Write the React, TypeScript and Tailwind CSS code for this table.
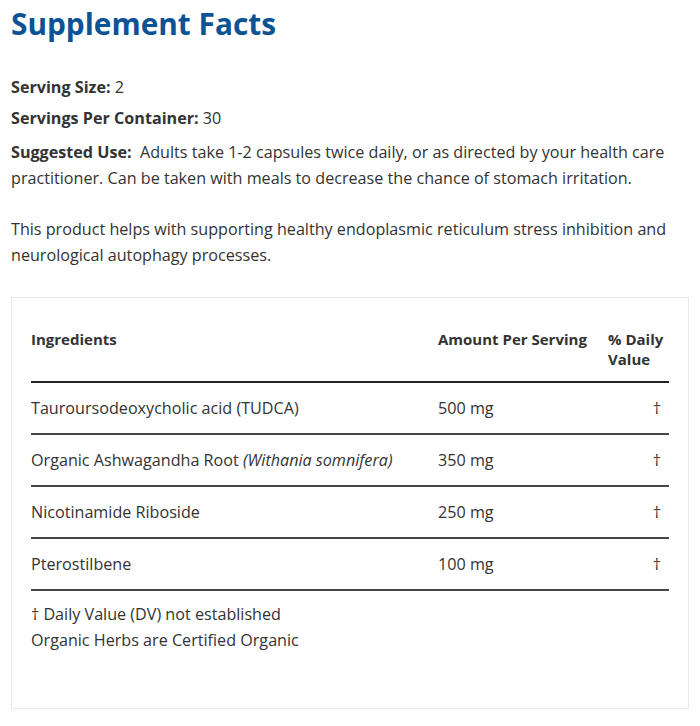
const rows = [
  { name: "Tauroursodeoxycholic acid (TUDCA)", latin: "", amount: "500 mg" },
  { name: "Organic Ashwagandha Root ", latin: "(Withania somnifera)", amount: "350 mg" },
  { name: "Nicotinamide Riboside", latin: "", amount: "250 mg" },
  { name: "Pterostilbene", latin: "", amount: "100 mg" },
];

export default function App() {
  return (
    <div className="min-h-screen bg-white px-[11px] pt-[6px] text-[16.15px] text-[#333333] font-['Open_Sans',sans-serif]">
      <h1 className="text-[29.8px] leading-[36px] font-bold text-[#0b5394]">Supplement Facts</h1>

      <p className="mt-[32px] leading-[26px]">
        <span className="font-bold">Serving Size:</span> 2
      </p>
      <p className="mt-[5px] leading-[26px]">
        <span className="font-bold">Servings Per Container:</span> 30
      </p>
      <p className="mt-[8px] leading-[26px]">
        <span className="font-bold">Suggested Use:</span>&nbsp; Adults take 1-2 capsules twice daily, or as directed by your health care
        practitioner. Can be taken with meals to decrease the chance of stomach irritation.
      </p>
      <p className="mt-[25px] leading-[26px]">
        This product helps with supporting healthy endoplasmic reticulum stress inhibition and neurological autophagy processes.
      </p>

      <div className="mt-[29px] border border-[#e8e8e8] px-[19px] pt-[31px] pb-[55px]">
        <div className="grid grid-cols-[407px_170px_1fr] border-b-2 border-[#222] pb-[12px] text-[15px] leading-[20px] font-bold">
          <div>Ingredients</div>
          <div>Amount Per Serving</div>
          <div>% Daily Value</div>
        </div>
        {rows.map((r) => (
          <div
            key={r.amount}
            className="grid grid-cols-[407px_170px_1fr] items-center h-[52px] border-b-2 border-[#444] leading-[26px]"
          >
            <div>
              {r.name}
              {r.latin && <i>{r.latin}</i>}
            </div>
            <div>{r.amount}</div>
            <div className="text-right pr-[8px]">†</div>
          </div>
        ))}
        <div className="mt-[10px] leading-[26px]">
          <p>† Daily Value (DV) not established</p>
          <p>Organic Herbs are Certified Organic</p>
        </div>
      </div>
    </div>
  );
}
